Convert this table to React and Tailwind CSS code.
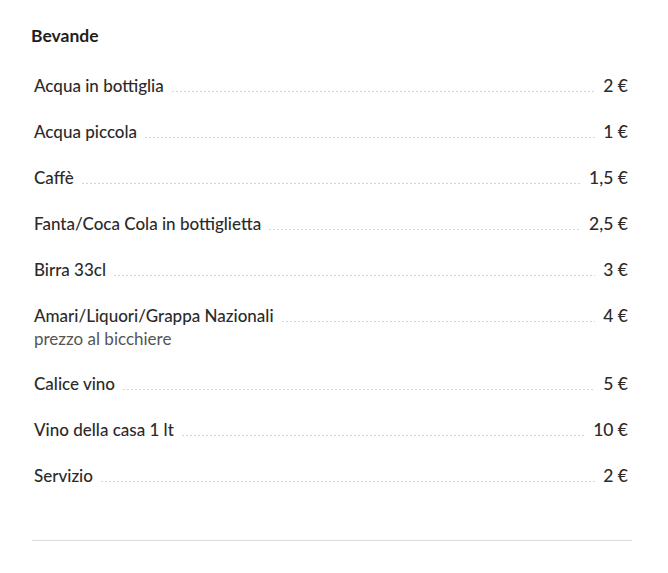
const items = [
  { name: 'Acqua in bottiglia', price: '2 €' },
  { name: 'Acqua piccola', price: '1 €' },
  { name: 'Caffè', price: '1,5 €' },
  { name: 'Fanta/Coca Cola in bottiglietta', price: '2,5 €' },
  { name: 'Birra 33cl', price: '3 €' },
  { name: 'Amari/Liquori/Grappa Nazionali', price: '4 €', note: 'prezzo al bicchiere' },
  { name: 'Calice vino', price: '5 €' },
  { name: 'Vino della casa 1 lt', price: '10 €' },
  { name: 'Servizio', price: '2 €' },
];

export default function App() {
  return (
    <div className="min-h-screen bg-white font-['Lato',sans-serif] text-[#2b2b2b]">
      <div className="w-[600px] ml-8 pt-6">
        <h2 className="text-[17.5px] leading-6 font-bold text-[#1e1e1e] -ml-px">Bevande</h2>

        <ul className="mt-[26px] px-[2px] pb-[30px]">
          {items.map((item) => (
            <li key={item.name} className="mb-[22px]">
              <div className="flex leading-6 font-medium">
                <span className="text-[17px]">{item.name}</span>
                <span className="flex-1 mx-2 mb-[6px] self-end h-px bg-[repeating-linear-gradient(to_right,#d4d4d4_0_2px,transparent_2px_4px)]" />
                <span className="text-[17.5px] pr-[2px]">{item.price}</span>
              </div>
              {item.note && (
                <p className="text-[17px] leading-[22px] text-[#555]">{item.note}</p>
              )}
            </li>
          ))}
        </ul>

        <hr className="border-0 h-px bg-[#dcdcdc]" />
      </div>
    </div>
  );
}
